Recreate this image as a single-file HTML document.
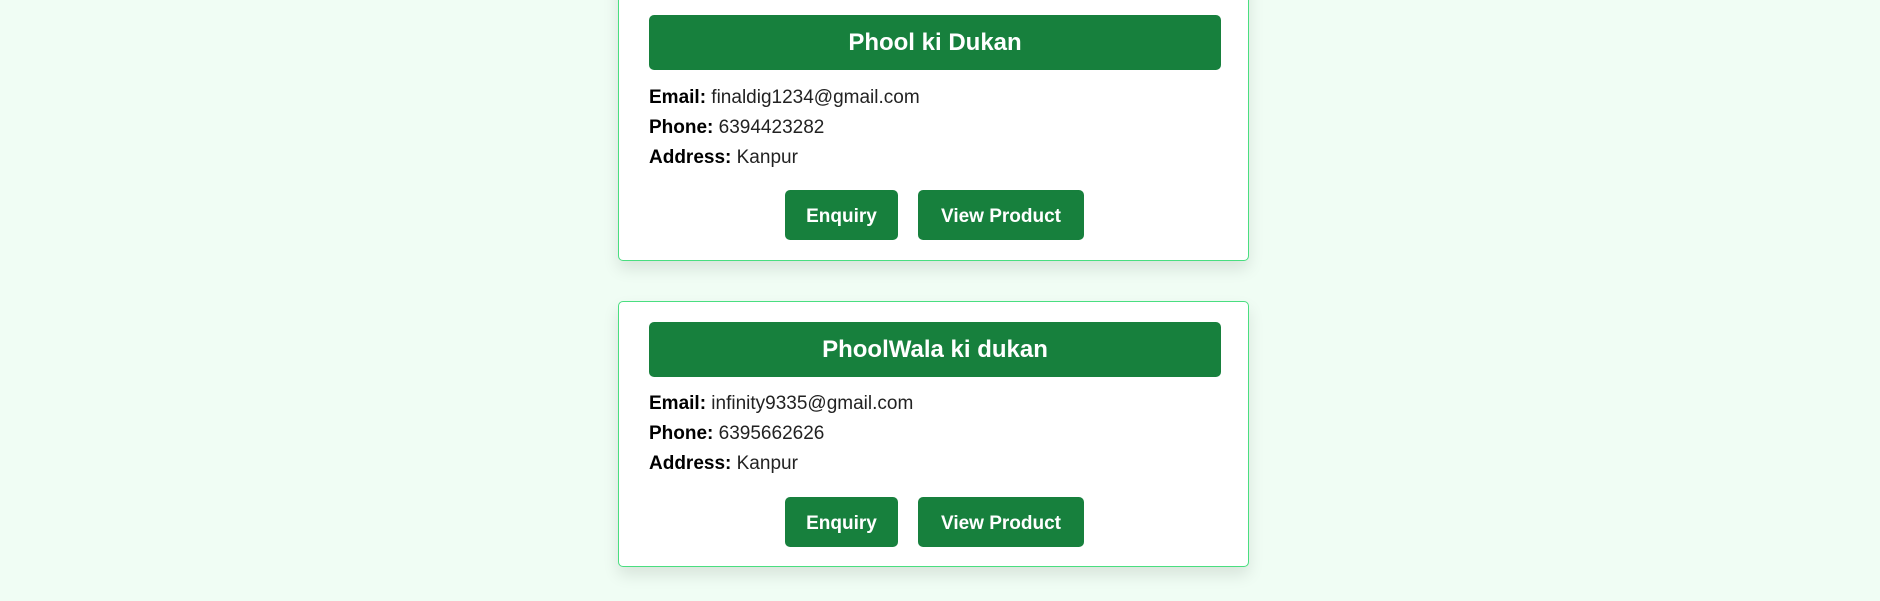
<!DOCTYPE html>
<html><head><style>
body{margin:0;background:#f0fdf4;width:1880px;height:601px;overflow:hidden;position:relative;font-family:"Liberation Sans",sans-serif;}
.card{position:absolute;left:618px;width:631px;background:#fff;border:1px solid #4ade80;border-radius:5px;box-shadow:0 8px 16px rgba(0,0,0,0.1);box-sizing:border-box;}
.hd{position:absolute;left:30px;width:572px;height:55px;background:#17803d;border-radius:5px;color:#fff;font-weight:bold;font-size:24px;text-align:center;line-height:55px;}
.ln{position:absolute;left:30px;font-size:19px;color:#222;line-height:24px;}
.ln b{color:#000}
.btn{position:absolute;height:50px;background:#17803d;border-radius:5px;color:#fff;font-weight:bold;font-size:19px;text-align:center;line-height:54px;}
</style></head><body>
<div class="card" style="top:-40px;height:301px;">
<div class="hd" style="top:54px">Phool ki Dukan</div>
<div class="ln" style="top:125px"><b>Email:</b> finaldig1234@gmail.com</div>
<div class="ln" style="top:155px"><b>Phone:</b> 6394423282</div>
<div class="ln" style="top:185px"><b>Address:</b> Kanpur</div>
<div class="btn" style="top:229px;left:166px;width:113px">Enquiry</div>
<div class="btn" style="top:229px;left:299px;width:166px">View Product</div>
</div>
<div class="card" style="top:301px;height:266px;">
<div class="hd" style="top:20px">PhoolWala ki dukan</div>
<div class="ln" style="top:90px"><b>Email:</b> infinity9335@gmail.com</div>
<div class="ln" style="top:120px"><b>Phone:</b> 6395662626</div>
<div class="ln" style="top:150px"><b>Address:</b> Kanpur</div>
<div class="btn" style="top:195px;left:166px;width:113px">Enquiry</div>
<div class="btn" style="top:195px;left:299px;width:166px">View Product</div>
</div>
</body></html>
